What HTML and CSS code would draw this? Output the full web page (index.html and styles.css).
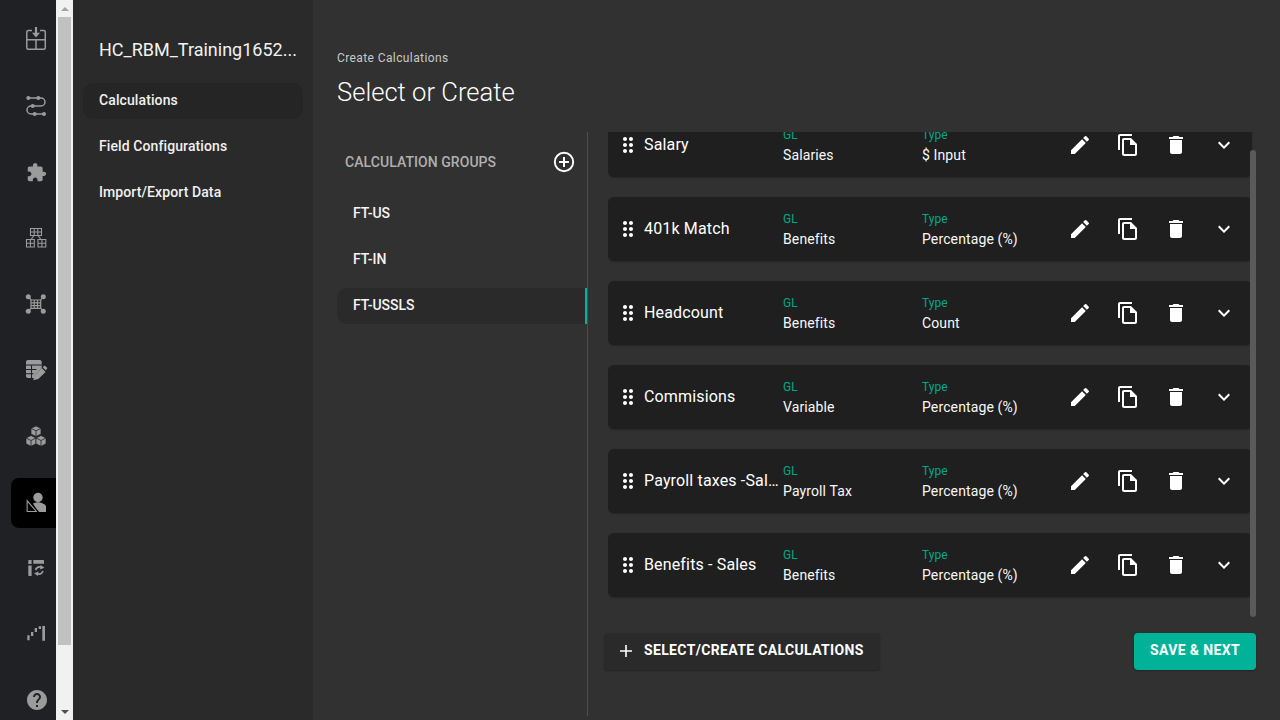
FILE: index.html
```html
<!DOCTYPE html>
<html lang="en">
<head>
<meta charset="utf-8">
<title>Create Calculations</title>
<link rel="stylesheet" href="styles.css">
</head>
<body>
<div class="app">
  <nav class="rail">
    <div class="rail-item"><svg class="ri" viewBox="0 0 24 24"><rect x="2.800" y="3.600" width="18.500" height="18.700" rx="1.500" fill="none" stroke="currentColor" stroke-width="1.500"/><path d="M2.800 12.800h18.500M12 12.800v9.500" stroke="currentColor" stroke-width="1.500" fill="none"/><path d="M8 2h8v3H8z" fill="#202124"/><path d="M10.900 0h2.200v5.800H16L12 10.500 8 5.800h2.900z" fill="currentColor"/></svg></div>
    <div class="rail-item"><svg class="ri" viewBox="0 0 24 24"><path d="M4.300 5H17a4 4 0 0 1 0 8H7a4 4 0 0 0 0 8h13" fill="none" stroke="currentColor" stroke-width="1.500"/><circle cx="4.300" cy="5" r="2" fill="currentColor"/><circle cx="14.300" cy="5" r="2" fill="currentColor"/><circle cx="8.700" cy="13" r="2" fill="currentColor"/><circle cx="10.700" cy="21" r="2" fill="currentColor"/><circle cx="20" cy="21" r="2" fill="currentColor"/></svg></div>
    <div class="rail-item"><svg class="ri ri-puzzle" viewBox="0 0 24 24"><path fill="currentColor" d="M20.500 11H19V7c0-1.100-.9-2-2-2h-4V3.500C13 2.120 11.880 1 10.500 1S8 2.120 8 3.500V5H4c-1.100 0-1.990.9-1.990 2v3.800H3.500c1.490 0 2.700 1.210 2.700 2.700s-1.210 2.700-2.700 2.700H2V20c0 1.100.9 2 2 2h3.800v-1.500c0-1.490 1.210-2.700 2.700-2.700 1.490 0 2.700 1.210 2.700 2.700V22H17c1.100 0 2-.9 2-2v-4h1.500c1.380 0 2.500-1.120 2.500-2.500S21.880 11 20.500 11z"/></svg></div>
    <div class="rail-item"><svg class="ri" viewBox="0 0 24 24"><g fill="none" stroke="currentColor" stroke-width="1.100"><path d="M6.500 3.500h11v7h-11zM10.200 3.500v7M13.800 3.500v7M6.500 7h11"/><path d="M2.500 14.500h7.800v7.500H2.500zM6.400 14.500V22M2.500 18.200h7.800"/><path d="M14 14.500h7.800v7.500H14zM17.900 14.500V22M14 18.200h7.800"/><path d="M10 10.500l-3 4M14 10.500l3 4"/></g></svg></div>
    <div class="rail-item"><svg class="ri" viewBox="0 0 24 24"><g fill="none" stroke="currentColor" stroke-width="1.200"><path d="M7 9h9.700v8.300H7zM10.200 9v8.300M13.500 9v8.300M7 11.800h9.700M7 14.600h9.700"/><path d="M4.300 5.700L7 9M19.300 5.700L16.700 9M4.300 20.300L7 17.300M19.300 20.300l-2.600-3"/></g><g fill="currentColor"><circle cx="4.300" cy="5.700" r="2.500"/><circle cx="19.300" cy="5.700" r="2.500"/><circle cx="4.300" cy="20.300" r="2.500"/><circle cx="19.300" cy="20.300" r="2.500"/></g></svg></div>
    <div class="rail-item"><svg class="ri" viewBox="0 0 24 24"><path fill="currentColor" d="M4 3h11.700c1.200 0 2 .8 2 2v6l-6.500 6.500-.8 3.500H4c-1.200 0-2-.8-2-2V5c0-1.200.8-2 2-2z"/><path d="M2 8h15.700M2 12.500h10.500M2 16.800h7.500M7.500 8v13" stroke="#202124" stroke-width="1.100" fill="none"/><path fill="currentColor" d="M9.300 23.300l1.200-5 7.200-7.200 3.900 3.800-7.300 7.200zM18.700 10.200l1.200-1.200a1 1 0 0 1 1.400 0l1.600 1.600a1 1 0 0 1 0 1.400L21.700 13.200z"/></svg></div>
    <div class="rail-item"><svg class="ri" viewBox="0 0 24 24"><g fill="currentColor" stroke="#202124" stroke-width=".7"><path d="M12 3l5 2.300v5.700L12 13.500 7 11V5.300z"/><path d="M7 12.500l5 2.500v5.700L7 23.300 2 20.700V15z"/><path d="M17 12.500l5 2.500v5.700l-5 2.600-5-2.600V15z"/></g><g fill="none" stroke="#202124" stroke-width=".8"><path d="M7 5.300l5 2.500 5-2.500M12 7.800v5.700M2 15l5 2.500 5-2.500M7 17.500v5.800M12 15l5 2.500 5-2.500M17 17.500v5.800"/></g></svg></div>
    <div class="rail-item rail-item-active"><svg class="ri" viewBox="0 0 24 24"><circle cx="14" cy="6.500" r="4.700" fill="currentColor"/><path fill="currentColor" d="M9 12.500c4.500-2 9.500-1.500 13 2.500v6h-8z"/><path fill="currentColor" stroke="#000" stroke-width="1.200" fill-rule="evenodd" d="M2 6.500l12.800 15H2zM4.300 12.800v6.700h5.700z"/></svg></div>
    <div class="rail-item"><svg class="ri" viewBox="0 0 24 24"><path fill="currentColor" d="M9.300 5h9.700c.6 0 1 .4 1 1v2.700H9.300zM5.300 5h2.300v4H4.300V6c0-.6.400-1 1-1zM4.300 10.500h3.300V21H5.300c-.6 0-1-.4-1-1z"/><path fill="none" stroke="currentColor" stroke-width="1.700" d="M11.500 15c1-2.500 3.500-3.500 6-2.700M19 16c-1 2.500-3.500 3.500-6 2.700"/><path fill="currentColor" d="M16.500 10l4 2.800-4.500 1.800zM14 21l-4-2.800 4.500-1.800z"/></svg></div>
    <div class="rail-item"><svg class="ri" viewBox="0 0 24 24"><path fill="currentColor" d="M3.300 14.300h2.300v5H3.300zM7 11h2.300v4H7zM10.700 7H13v4h-2.300zM14.700 5.300H17V8h-2.300zM18.300 5H21v14.700h-2.700z"/></svg></div>
    <div class="rail-item"><svg class="ri" viewBox="-1 -1 24 24"><path fill="currentColor" d="M12 2C6.480 2 2 6.480 2 12s4.480 10 10 10 10-4.480 10-10S17.520 2 12 2zm1 17h-2v-2h2v2zm2.070-7.750l-.9.920C13.450 12.900 13 13.500 13 15h-2v-.5c0-1.100.45-2.100 1.170-2.830l1.240-1.260c.37-.36.59-.86.59-1.410 0-1.100-.9-2-2-2s-2 .9-2 2H8c0-2.210 1.790-4 4-4s4 1.790 4 4c0 .88-.36 1.680-.93 2.250z"/></svg></div>
  </nav>

  <div class="page-scrollbar">
    <div class="sb-btn"><span class="arrow-up"></span></div>
    <div class="sb-thumb"></div>
    <div class="sb-btn"><span class="arrow-down"></span></div>
  </div>

  <aside class="sidebar">
    <h1 class="project">HC_RBM_Training1652...</h1>
    <ul class="side-menu">
      <li class="side-item side-item-active">Calculations</li>
      <li class="side-item">Field Configurations</li>
      <li class="side-item">Import/Export Data</li>
    </ul>
  </aside>

  <main class="main">
    <header class="head">
      <div class="crumb">Create Calculations</div>
      <h2 class="title">Select or Create</h2>
    </header>
    <div class="work">
      <section class="groups">
        <div class="groups-head">
          <span class="groups-label">CALCULATION GROUPS</span>
          <svg class="add-icon" viewBox="0 0 22 22"><circle cx="11" cy="11" r="9.200" fill="none" stroke="currentColor" stroke-width="1.900"/><path d="M11 6v10M6 11h10" stroke="currentColor" stroke-width="2"/></svg>
        </div>
        <div class="group">FT-US</div>
        <div class="group">FT-IN</div>
        <div class="group group-active">FT-USSLS</div>
      </section>

      <section class="calcs">
        <div class="calc-scroll">
          <div class="calc-list">
            <article class="card">
              <svg class="drag" viewBox="0 0 24 24"><use href="#i-drag"/></svg>
              <div class="card-name">Salary</div>
              <div class="field"><span class="f-label">GL</span><span class="f-val">Salaries</span></div>
              <div class="field field-type"><span class="f-label">Type</span><span class="f-val">$ Input</span></div>
              <div class="actions"><svg viewBox="0 0 24 24"><use href="#i-edit"/></svg><svg viewBox="0 0 24 24"><use href="#i-copy"/></svg><svg viewBox="0 0 24 24"><use href="#i-del"/></svg><svg viewBox="0 0 24 24"><use href="#i-more"/></svg></div>
            </article>
            <article class="card">
              <svg class="drag" viewBox="0 0 24 24"><use href="#i-drag"/></svg>
              <div class="card-name">401k Match</div>
              <div class="field"><span class="f-label">GL</span><span class="f-val">Benefits</span></div>
              <div class="field field-type"><span class="f-label">Type</span><span class="f-val">Percentage (%)</span></div>
              <div class="actions"><svg viewBox="0 0 24 24"><use href="#i-edit"/></svg><svg viewBox="0 0 24 24"><use href="#i-copy"/></svg><svg viewBox="0 0 24 24"><use href="#i-del"/></svg><svg viewBox="0 0 24 24"><use href="#i-more"/></svg></div>
            </article>
            <article class="card">
              <svg class="drag" viewBox="0 0 24 24"><use href="#i-drag"/></svg>
              <div class="card-name">Headcount</div>
              <div class="field"><span class="f-label">GL</span><span class="f-val">Benefits</span></div>
              <div class="field field-type"><span class="f-label">Type</span><span class="f-val">Count</span></div>
              <div class="actions"><svg viewBox="0 0 24 24"><use href="#i-edit"/></svg><svg viewBox="0 0 24 24"><use href="#i-copy"/></svg><svg viewBox="0 0 24 24"><use href="#i-del"/></svg><svg viewBox="0 0 24 24"><use href="#i-more"/></svg></div>
            </article>
            <article class="card">
              <svg class="drag" viewBox="0 0 24 24"><use href="#i-drag"/></svg>
              <div class="card-name">Commisions</div>
              <div class="field"><span class="f-label">GL</span><span class="f-val">Variable</span></div>
              <div class="field field-type"><span class="f-label">Type</span><span class="f-val">Percentage (%)</span></div>
              <div class="actions"><svg viewBox="0 0 24 24"><use href="#i-edit"/></svg><svg viewBox="0 0 24 24"><use href="#i-copy"/></svg><svg viewBox="0 0 24 24"><use href="#i-del"/></svg><svg viewBox="0 0 24 24"><use href="#i-more"/></svg></div>
            </article>
            <article class="card">
              <svg class="drag" viewBox="0 0 24 24"><use href="#i-drag"/></svg>
              <div class="card-name">Payroll taxes -Sales</div>
              <div class="field"><span class="f-label">GL</span><span class="f-val">Payroll Tax</span></div>
              <div class="field field-type"><span class="f-label">Type</span><span class="f-val">Percentage (%)</span></div>
              <div class="actions"><svg viewBox="0 0 24 24"><use href="#i-edit"/></svg><svg viewBox="0 0 24 24"><use href="#i-copy"/></svg><svg viewBox="0 0 24 24"><use href="#i-del"/></svg><svg viewBox="0 0 24 24"><use href="#i-more"/></svg></div>
            </article>
            <article class="card">
              <svg class="drag" viewBox="0 0 24 24"><use href="#i-drag"/></svg>
              <div class="card-name">Benefits - Sales</div>
              <div class="field"><span class="f-label">GL</span><span class="f-val">Benefits</span></div>
              <div class="field field-type"><span class="f-label">Type</span><span class="f-val">Percentage (%)</span></div>
              <div class="actions"><svg viewBox="0 0 24 24"><use href="#i-edit"/></svg><svg viewBox="0 0 24 24"><use href="#i-copy"/></svg><svg viewBox="0 0 24 24"><use href="#i-del"/></svg><svg viewBox="0 0 24 24"><use href="#i-more"/></svg></div>
            </article>
          </div>
          <div class="calc-thumb"></div>
        </div>
        <div class="btn-row">
          <button class="btn btn-dark"><svg class="plus" viewBox="0 0 14 14"><path d="M7 1v12M1 7h12" stroke="currentColor" stroke-width="1.600"/></svg>SELECT/CREATE CALCULATIONS</button>
          <button class="btn btn-save">SAVE &amp; NEXT</button>
        </div>
      </section>
    </div>
  </main>
</div>

<svg class="defs" aria-hidden="true">
  <symbol id="i-drag" viewBox="0 0 24 24"><path fill="currentColor" d="M11 18c0 1.100-.9 2-2 2s-2-.9-2-2 .9-2 2-2 2 .9 2 2zm-2-8c-1.100 0-2 .9-2 2s.9 2 2 2 2-.9 2-2-.9-2-2-2zm0-6c-1.100 0-2 .9-2 2s.9 2 2 2 2-.9 2-2-.9-2-2-2zm6 4c1.100 0 2-.9 2-2s-.9-2-2-2-2 .9-2 2 .9 2 2 2zm0 2c-1.100 0-2 .9-2 2s.9 2 2 2 2-.9 2-2-.9-2-2-2zm0 6c-1.100 0-2 .9-2 2s.9 2 2 2 2-.9 2-2-.9-2-2-2z"/></symbol>
  <symbol id="i-edit" viewBox="0 0 24 24"><path fill="currentColor" d="M3 17.250V21h3.750L17.810 9.940l-3.750-3.750L3 17.250zM20.710 7.040a1 1 0 0 0 0-1.410l-2.340-2.340a1 1 0 0 0-1.410 0l-1.830 1.830 3.750 3.750 1.830-1.830z"/></symbol>
  <symbol id="i-copy" viewBox="0 0 24 24"><path fill="currentColor" d="M16 1H4c-1.100 0-2 .9-2 2v14h2V3h12V1zm-1 4H8c-1.100 0-1.990.9-1.990 2L6 21c0 1.100.89 2 1.990 2H19c1.100 0 2-.9 2-2V11l-6-6zM8 21V7h6v5h5v9H8z"/></symbol>
  <symbol id="i-del" viewBox="0 0 24 24"><path fill="currentColor" d="M6 19c0 1.100.9 2 2 2h8c1.100 0 2-.9 2-2V7H6v12zM19 4h-3.500l-1-1h-5l-1 1H5v2h14V4z"/></symbol>
  <symbol id="i-more" viewBox="0 0 24 24"><path fill="currentColor" d="M16.590 8.590L12 13.170 7.410 8.590 6 10l6 6 6-6z"/></symbol>
</svg>
</body>
</html>
```
FILE: styles.css
```css
* { box-sizing: border-box; }
html, body { margin: 0; height: 100%; overflow: hidden; }
body { font-family: Roboto, "Liberation Sans", sans-serif; color: #fff; background: #313131; }
.defs { display: none; }

.app { display: flex; width: 1280px; height: 720px; }

.rail { width: 56px; flex: none; background: #202124; color: #9b9b9b; padding: 6px 0 0 11px; display: flex; flex-direction: column; overflow: hidden; }
.rail-item { height: 66px; flex: none; display: flex; align-items: center; justify-content: center; width: 50px; margin-right: -5px; }
.rail-item-active { height: 50px; margin: 10px 0 6px; width: 45px; padding-left: 5px; background: #000; border-radius: 8px 0 0 8px; }
.ri { width: 24px; height: 24px; display: block; flex: none; }
.ri-puzzle { width: 21px; height: 21px; margin-top: 2px; }

.page-scrollbar { width: 17px; flex: none; background: #f1f1f1; display: flex; flex-direction: column; }
.sb-btn { height: 17px; flex: none; display: flex; align-items: center; justify-content: center; }
.sb-thumb { flex: none; height: 628px; margin: 0 2px; background: #c1c1c1; }
.page-scrollbar .sb-btn:last-child { margin-top: auto; }
.arrow-up { border: 4px solid transparent; border-top: 0; border-bottom: 4px solid #a3a3a3; }
.arrow-down { border: 4px solid transparent; border-bottom: 0; border-top: 4px solid #505050; }

.sidebar { width: 240px; flex: none; background: #2a2a2a; padding: 39px 10px 0; }
.project { margin: 0 0 23px 16px; font-size: 18px; line-height: 21px; font-weight: 400; color: #f2f2f2; white-space: nowrap; }
.side-menu { list-style: none; margin: 0; padding: 0; display: flex; flex-direction: column; gap: 10px; }
.side-item { height: 36px; padding-left: 16px; line-height: 34px; font-size: 14px; font-weight: 500; letter-spacing: .1px; color: #f0f0f0; border-radius: 10px; }
.side-item-active { background: #252525; }

.main { flex: 1; min-width: 0; background: #313131; display: flex; flex-direction: column; }
.head { height: 132px; padding: 51px 0 0 24px; }
.crumb { font-size: 12px; line-height: 14px; font-weight: 400; letter-spacing: .4px; color: #c8c8c8; }
.title { margin: 11px 0 0; font-size: 25.6px; line-height: 32px; font-weight: 300; color: #fff; }

.work { flex: 1; display: flex; padding: 0 24px 4px; min-height: 0; }
.groups { width: 251px; flex: none; border-right: 1px solid #4d4d4d; }
.groups-head { height: 60px; display: flex; align-items: center; justify-content: space-between; padding: 0 12px 0 8px; }
.groups-label { font-size: 14px; font-weight: 500; letter-spacing: .06px; color: #b0b0b0; }
.add-icon { width: 22px; height: 22px; color: #fff; }
.group { height: 36px; margin-top: 10px; padding-left: 16px; line-height: 36px; font-size: 14px; font-weight: 500; color: #f4f4f4; }
.groups-head + .group { margin-top: 3px; }
.group-active { margin-top: 11px; line-height: 34px; background: #2a2a2a; border-radius: 10px 0 0 10px; border-right: 2px solid #00b398; }

.calcs { flex: 1; min-width: 0; display: flex; flex-direction: column; padding-left: 16px; }
.calc-scroll { position: relative; height: 489px; overflow: hidden; margin-left: 4px; }
.calc-list { margin-top: -19px; width: 644px; display: flex; flex-direction: column; gap: 20px; }
.card { height: 64px; flex: none; display: flex; align-items: center; background: #1f1f1f; border-radius: 6px; box-shadow: 0 1px 2px rgba(0,0,0,.25); padding-left: 8px; }
.drag { width: 24px; height: 24px; flex: none; color: #fff; }
.card-name { width: 137px; margin: 0 2px 0 4px; padding-bottom: 2px; font-size: 16px; font-weight: 400; letter-spacing: .15px; color: #fff; white-space: nowrap; overflow: hidden; text-overflow: ellipsis; }
.field { width: 139px; flex: none; display: flex; flex-direction: column; padding-top: 2px; }
.f-label { font-size: 12px; line-height: 14px; color: #00a88a; }
.f-val { margin-top: 5px; font-size: 14px; line-height: 17px; font-weight: 400; letter-spacing: .12px; color: #f8f8f8; }
.field-type { width: 146px; }
.actions { display: flex; gap: 24px; color: #fff; }
.actions svg { width: 24px; height: 24px; display: block; }
.calc-thumb { position: absolute; right: 0; top: 18px; width: 6px; height: 467px; background: #5a5a5a; border-radius: 3px; }

.btn-row { display: flex; justify-content: space-between; margin-top: 12px; }
.btn { height: 37px; border: 0; border-radius: 4px; font-family: inherit; font-size: 14px; font-weight: 700; letter-spacing: .35px; color: #fff; display: flex; align-items: center; padding-bottom: 4px; box-shadow: 0 1px 2px rgba(0,0,0,.3); }
.btn-dark { width: 276px; background: #2a2a2a; padding-left: 15px; }
.plus { width: 14px; height: 14px; margin: 2px 11px 0 0; }
.btn-save { width: 122px; background: #00b398; justify-content: center; }
```
